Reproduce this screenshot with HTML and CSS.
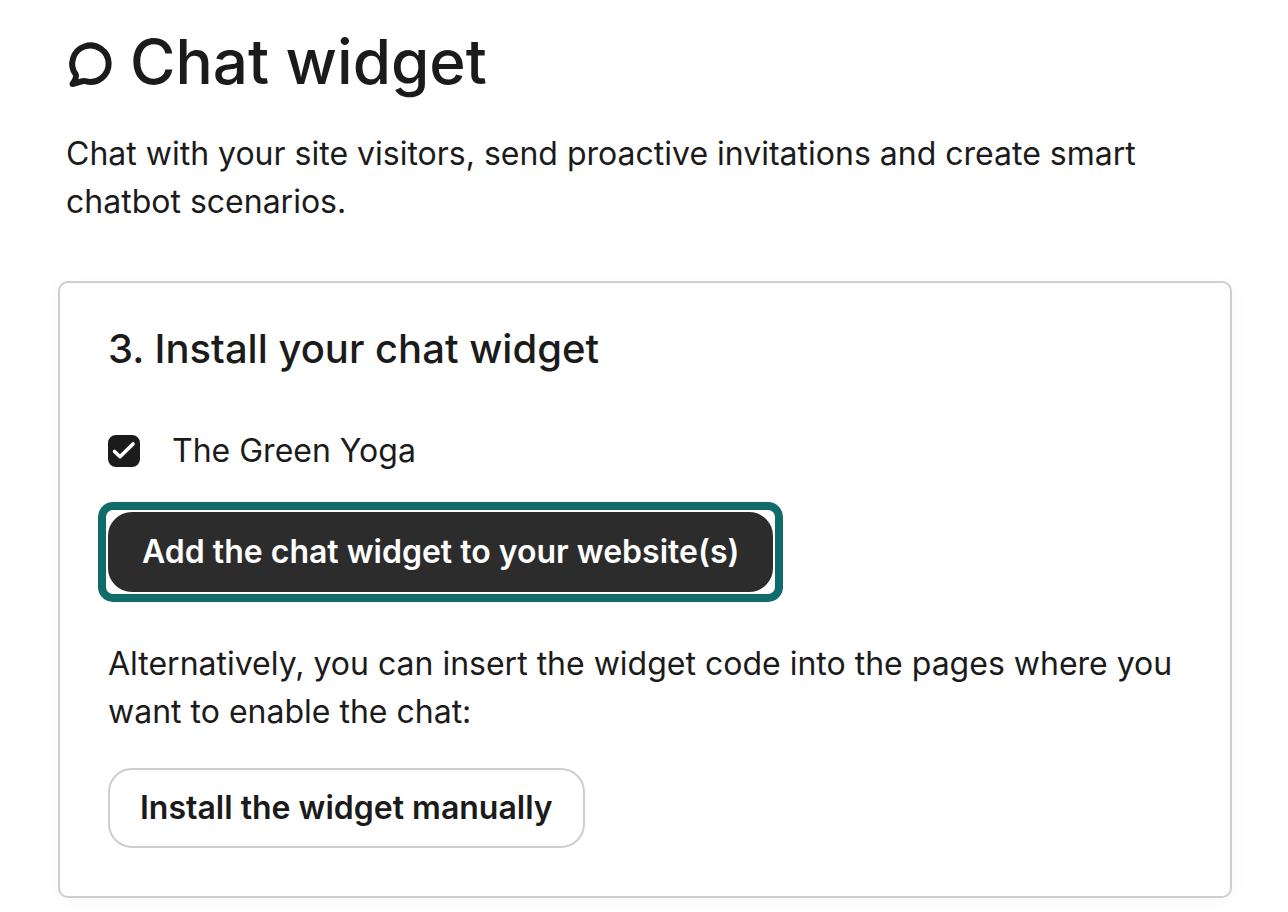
FILE: index.html
```html
<!DOCTYPE html>
<html lang="en">
<head>
<meta charset="utf-8">
<meta name="viewport" content="width=device-width, initial-scale=1">
<title>Chat widget</title>
<link rel="stylesheet" href="styles.css">
</head>
<body>
<main class="page">
  <header class="intro">
    <h1 class="title">
      <svg class="title-icon" viewBox="-1 -1 48 48" fill="none" stroke="currentColor" stroke-width="6" stroke-linecap="round" stroke-linejoin="round" aria-hidden="true">
        <path d="M5.500 43 C8.500 38.500 9.700 36 8.800 33.500 A18.200 18.200 0 1 1 18.500 40.200 C16 39.300 14 41 5.500 43 Z"/>
      </svg>
      <span class="title-text">Chat widget</span>
    </h1>
    <p class="text">Chat with your site visitors, send proactive invitations and create smart chatbot scenarios.</p>
  </header>
  <section class="card">
    <h2 class="subtitle">3. Install your chat widget</h2>
    <label class="site">
      <span class="check">
        <input class="check-input" type="checkbox" checked>
        <svg class="check-mark" viewBox="0 0 32 32" fill="none" stroke="currentColor" stroke-width="3.600" stroke-linecap="round" stroke-linejoin="round" aria-hidden="true"><path d="M6.500 16.500 L12 21.700 L25 9"/></svg>
      </span>
      <span>The Green Yoga</span>
    </label>
    <div class="focus-ring">
      <button class="button button-primary" type="button">Add the chat widget to your website(s)</button>
    </div>
    <p class="text alternative">Alternatively, you can insert the widget code into the pages where you want to enable the chat:</p>
    <button class="button button-outline" type="button">Install the widget manually</button>
  </section>
</main>
</body>
</html>
```
FILE: styles.css
```css
* {
  box-sizing: border-box;
}

body {
  margin: 0;
  background: #fff;
  color: #1b1b1b;
  font-family: Inter, "Liberation Sans", sans-serif;
  font-size: 32px;
  line-height: 48px;
  font-optical-sizing: none;
}

.page {
  padding: 24px 56px 14px 58px;
}

.intro {
  padding: 0 8px;
}

.title {
  display: flex;
  align-items: center;
  gap: 16px;
  margin: 0 0 26px;
  font-size: 62px;
  font-weight: 500;
  line-height: 76px;
}

.title-icon {
  width: 48px;
  height: 48px;
}

.title-text {
  padding-bottom: 4px;
}

.text {
  margin: 0;
}

.card {
  margin-top: 55px;
  padding: 42px 48px 48px;
  border: 2px solid #cecece;
  border-radius: 10px;
  box-shadow: 0 4px 24px rgba(0, 0, 0, 0.03);
}

.subtitle {
  margin: 0 0 54px;
  font-size: 40px;
  font-weight: 500;
  line-height: 48px;
}

.site {
  display: flex;
  align-items: center;
  gap: 32px;
  width: fit-content;
}

.check {
  display: grid;
  color: #fff;
}

.check-input,
.check-mark {
  grid-area: 1 / 1;
  width: 32px;
  height: 32px;
}

.check-input {
  margin: 0;
  border: 2px solid #1b1b1b;
  border-radius: 8px;
  appearance: none;
}

.check-input:checked {
  background: #1b1b1b;
}

.check-mark {
  pointer-events: none;
}

.focus-ring {
  width: fit-content;
  margin: 27px -10px 38px;
  padding: 2px;
  border: 8px solid #126b6b;
  border-radius: 15px;
}

.button {
  display: block;
  height: 80px;
  padding: 0 30px;
  border: 2px solid #cecece;
  border-radius: 24px;
  background: #fff;
  color: #1b1b1b;
  font: inherit;
  font-weight: 600;
}

.button-primary {
  padding: 0 32px;
  border-color: #2c2c2c;
  background: #2c2c2c;
  color: #fff;
}

.alternative {
  margin-bottom: 32px;
}
```
